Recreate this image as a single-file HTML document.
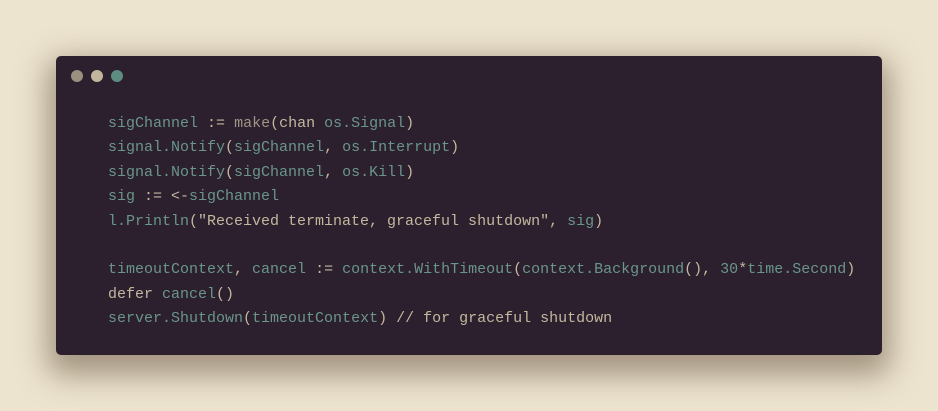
<html><head><style>
body{margin:0;width:938px;height:411px;background:#ede4cf;overflow:hidden;position:relative}
.card{position:absolute;left:56px;top:56px;width:826px;height:299px;background:#2c1f2e;border-radius:5px;box-shadow:0 12px 30px 8px rgba(90,70,50,.5)}
.d{position:absolute;top:14px;width:12px;height:12px;border-radius:50%}
pre{position:absolute;left:52px;top:56px;margin:0;font:15px/24.4px "Liberation Mono",monospace;color:#6a968a}
.b{color:#c4b89e}.m{color:#a09584}
</style></head><body>
<div class="card">
<div class="d" style="left:15px;background:#9b8f7f"></div>
<div class="d" style="left:35px;background:#c2b59d"></div>
<div class="d" style="left:55px;background:#5e8c80"></div>
<pre>sigChannel <span class="b">:=</span> <span class="m">make</span><span class="b">(chan</span> os.Signal<span class="b">)</span>
signal.Notify<span class="b">(</span>sigChannel<span class="b">,</span> os.Interrupt<span class="b">)</span>
signal.Notify<span class="b">(</span>sigChannel<span class="b">,</span> os.Kill<span class="b">)</span>
sig <span class="b">:= &lt;-</span>sigChannel
l.Println<span class="b">("Received terminate, graceful shutdown",</span> sig<span class="b">)</span>

timeoutContext<span class="b">,</span> cancel <span class="b">:=</span> context.WithTimeout<span class="b">(</span>context.Background<span class="b">(),</span> 30<span class="b">*</span>time.Second<span class="b">)</span>
<span class="b">defer</span> cancel<span class="b">()</span>
server.Shutdown<span class="b">(</span>timeoutContext<span class="b">) // for graceful shutdown</span></pre>
</div>
</body></html>
